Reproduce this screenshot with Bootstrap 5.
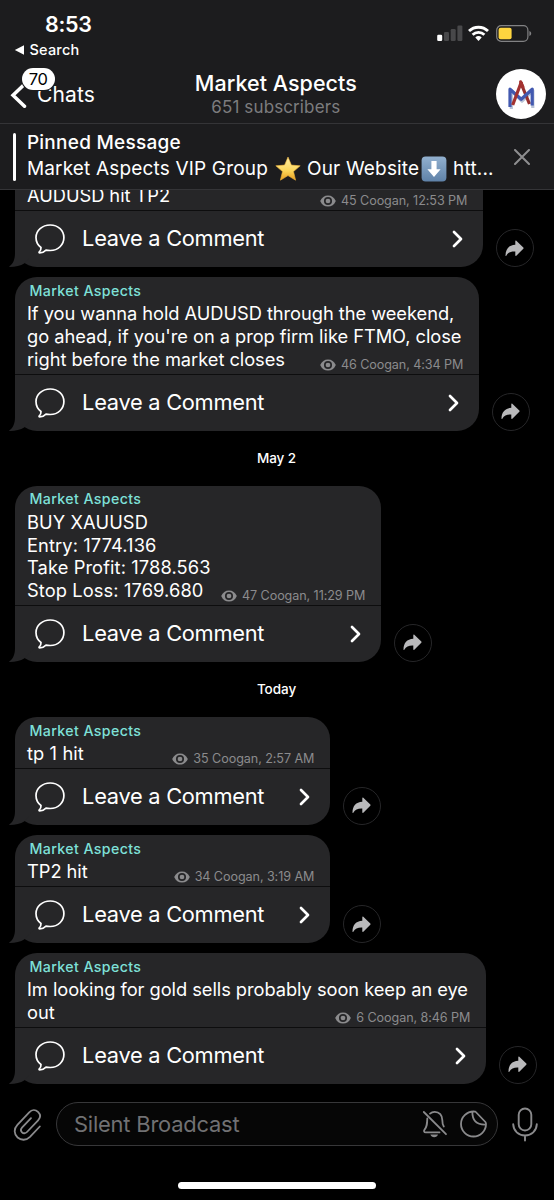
<!DOCTYPE html>
<html lang="en">
<head>
<meta charset="utf-8">
<meta name="viewport" content="width=device-width, initial-scale=1">
<title>Market Aspects</title>
<link href="https://cdn.jsdelivr.net/npm/bootstrap@5.3.0/dist/css/bootstrap.min.css" rel="stylesheet">
<style>
  body { width: 554px; height: 1200px; overflow: hidden; background: #000; color: #fff; font-family: Inter, "Liberation Sans", sans-serif; }
  svg { display: block; flex: none; }
  .top-panel { background: #1c1c1e; flex: none; }
  .status { height: 60px; }
  .status-left { padding-top: 12.2px; }
  .clock { font-size: 21.5px; line-height: 24px; font-weight: 600; letter-spacing: -.3px; padding-left: 45px; }
  .back-app { font-size: 14.5px; line-height: 18px; font-weight: 500; letter-spacing: .2px; padding: 0 0 0 14px; margin-top: 4.5px; gap: 4.5px; }
  .status-right { padding: 25px 22.3px 0 0; gap: 7px; }
  .wifi { margin-left: -2px; }
  .title-row { height: 64px; border-bottom: 1px solid #343437; display: grid; grid-template-columns: 1fr auto 1fr; }
  .back-link { padding: 21.9px 0 0 10px; font-size: 21px; line-height: 26px; letter-spacing: .14px; }
  .back-link .label { margin-left: 10px; }
  .unread { left: 21.5px; top: 8px; width: 33.5px; height: 22px; border-radius: 11px; background: #fff; color: #000; font-size: 16.5px; line-height: 22px; letter-spacing: -.2px; box-shadow: 0 0 0 1px #1c1c1e; }
  .chan { padding: 10.2px 2.4px 0 0; }
  .chan-name { font-size: 21.5px; line-height: 26px; font-weight: 500; letter-spacing: .04px; }
  .chan-subs { font-size: 17px; line-height: 20px; letter-spacing: .12px; color: #7c7c7e; margin-top: .4px; }
  .logo { width: 50px; height: 50px; margin: 9px 8px 0 0; border-radius: 50%; background: #fff; }
  .pinned { height: 66px; border-bottom: 1px solid #343437; padding-left: 13.3px; }
  .pin-bar { width: 2.6px; height: 48px; margin-top: 9px; border-radius: 2px; background: #fff; }
  .pin-text { margin: 6.6px 0 0 11px; }
  .pin-title { font-size: 19px; line-height: 24px; font-weight: 500; letter-spacing: .25px; }
  .pin-line { font-size: 19px; line-height: 26px; letter-spacing: .17px; margin-top: 1.6px; white-space: pre; }
  .star { margin: 0 6px 0 7px; }
  .arrow-box { margin: 0 6.5px 0 1.3px; }
  .close-x { margin: 25px 24px 0 auto; }
  .feed { height: 893.8px; overflow: hidden; flex: none; }
  .post { gap: 12.6px; margin: 0 0 10px 15px; flex: none; }
  .post.last-in-day { margin-bottom: 0; }
  .bubble { background: #262628; border-radius: 22px; position: relative; }
  .tail { position: absolute; left: -6px; bottom: 0; }
  .bubble-text { padding: 5.6px 15.7px 3.3px 12px; border-bottom: 1px solid #0d0d0e; }
  .author { height: 16px; font-size: 14.2px; line-height: 16px; font-weight: 500; letter-spacing: .38px; color: #7ee0d8; padding-left: 2.5px; margin-bottom: 3.6px; }
  .msg { font-size: 18.3px; line-height: 22.75px; letter-spacing: -.05px; white-space: nowrap; }
  .signal .msg > span:first-child, .signal div.msg { letter-spacing: .1px; }
  .msg .views, .signal .msg .views { font-size: 12.6px; line-height: 12px; letter-spacing: -.08px; color: #8b8b8d; gap: 5px; margin-top: 10.75px; height: 12px; }
  .comment { height: 55.8px; padding: 0 20.4px 0 20px; }
  .comment-label { font-size: 21.8px; line-height: 26px; letter-spacing: -.27px; padding: 0 0 2.4px 17.1px; }
  .share { width: 38px; height: 38px; border: 1px solid #262628; border-radius: 50%; flex: none; }
  .day { height: 55px; font-size: 13.5px; font-weight: 500; letter-spacing: -.05px; line-height: 55px; flex: none; padding-right: 1px; }
  .composer { padding: 18.5px 16px 0 13px; }
  .field { width: 441.5px; height: 43.5px; border: 1px solid #373739; border-radius: 22px; background: #060606; margin-left: 14px; padding: 0 9.5px 0 17px; }
  .placeholder-text { font-size: 21.9px; letter-spacing: -.2px; line-height: 26px; color: #717173; padding-bottom: 1px; }
  .home-bar { width: 198px; height: 7.5px; border-radius: 4px; background: #fff; margin: 36.2px auto 0; }
</style>
</head>
<body class="d-flex flex-column">

<svg width="0" height="0" class="position-absolute" aria-hidden="true">
  <symbol id="i-bubble" viewBox="0 0 30 30"><path d="M15.200 1C7.200 1 1 6.500 1 13.500c0 4.300 1.900 7.700 5 10c.1 1.900-.4 3.200-1.700 4.400c-.5.500-.2 1 .4 1c2.400 0 4.500-1 6.300-2.800c1.300.3 2.700.4 4.200.4c8 0 13.700-5.700 13.700-12.900S23.200 1 15.200 1z" fill="none" stroke="#fff" stroke-width="1.700" stroke-linejoin="round"/></symbol>
  <symbol id="i-chev" viewBox="0 0 11 18"><path d="M2 2l7 7L2 16" fill="none" stroke="#fff" stroke-width="2.700" stroke-linecap="round" stroke-linejoin="round"/></symbol>
  <symbol id="i-eye" viewBox="0 0 16 12"><path d="M8 .4C4.500.4 1.700 2.400.2 6c1.500 3.600 4.300 5.600 7.800 5.600S14.300 9.600 15.800 6C14.300 2.400 11.500.4 8 .4z" fill="#8b8b8d"/><circle cx="8" cy="6" r="3.200" fill="none" stroke="#262628" stroke-width="1.700"/></symbol>
  <symbol id="i-share" viewBox="0 0 19 17"><path d="M10.300 1.200c0-.7.5-.9 1-.5l7 6.900c.4.400.4.800 0 1.200l-7 6.900c-.5.400-1 .2-1-.5v-3.600C6.200 11.400 3.100 12.300 1.300 15.700c-.3.500-.8.400-.8-.3C.6 9.300 3.900 5 10.300 4.800z" fill="#b9b9bb"/></symbol>
  <symbol id="i-tail" viewBox="0 0 26 26"><path d="M6 0v12C6 18 4.500 22.500.4 25.300C.1 25.600.3 26 .7 26C6.500 26 11.500 25 15.500 22.300L26 12V0z" fill="#262628"/></symbol>
</svg>

<header class="top-panel">
  <div class="status d-flex justify-content-between">
    <div class="status-left">
      <div class="clock">8:53</div>
      <div class="back-app d-flex align-items-center">
        <svg width="11" height="10" viewBox="0 0 11 10"><path d="M.8 5L10 .3v9.400z" fill="#fff"/></svg><span>Search</span>
      </div>
    </div>
    <div class="status-right d-flex">
      <svg width="26" height="17" viewBox="0 0 26 17"><rect x=".2" y="9.700" width="5" height="6.300" rx="1.200" fill="#fff"/><g fill="#48484a"><rect x="7" y="7" width="5" height="9" rx="1.200"/><rect x="13.700" y="4" width="5" height="12" rx="1.200"/><rect x="20.400" y=".5" width="5" height="15.500" rx="1.200"/></g></svg>
      <svg class="wifi" width="21" height="17" viewBox="0 0 21 17"><g fill="none" stroke="#fff" stroke-width="2.800"><path d="M1 6.100a13.600 13.600 0 0 1 19 0"/><path d="M4.600 9.700a8.500 8.500 0 0 1 11.800 0"/></g><path d="M7.300 12.600a4.700 4.700 0 0 1 6.400 0L10.500 16z" fill="#fff"/></svg>
      <svg width="36" height="17" viewBox="0 0 36 17"><rect x=".7" y=".7" width="31.200" height="15.600" rx="4.500" fill="none" stroke="#828284" stroke-width="1.200"/><rect x="2.600" y="2.700" width="13" height="11.600" rx="2" fill="#fed53f"/><path d="M33.400 6v5c1.200-.5 1.800-1.400 1.800-2.500S34.600 6.500 33.400 6z" fill="#828284"/></svg>
    </div>
  </div>
  <div class="title-row">
    <div class="back-link d-flex align-items-start position-relative">
      <svg width="17" height="27" viewBox="0 0 17 27"><path d="M14.500 2.200L3 13.200l11.500 11" fill="none" stroke="#fff" stroke-width="3.500" stroke-linecap="round" stroke-linejoin="miter"/></svg>
      <span class="label">Chats</span>
      <span class="unread position-absolute text-center">70</span>
    </div>
    <div class="chan text-center">
      <div class="chan-name">Market Aspects</div>
      <div class="chan-subs">651 subscribers</div>
    </div>
    <div class="logo ms-auto">
      <svg width="50" height="50" viewBox="0 0 50 50"><g fill="none" stroke-width="3.200" stroke-linejoin="round" stroke-linecap="butt"><path d="M14.300 39V20.500L25 31l10.800-10.500V38" stroke="#b9c3d6" transform="translate(1 1)"/><path d="M24.700 13.500L33.500 35" stroke="#96302f"/><path d="M14 38V20.200L25.200 30.300 36.200 20.200V36.500" stroke="#4259b0"/><path d="M16.700 36L25.400 12.800" stroke="#a33230"/><path d="M24.700 12.800l2.200 5" stroke="#a33230" stroke-linecap="round"/></g></svg>
    </div>
  </div>
  <div class="pinned d-flex align-items-start">
    <div class="pin-bar"></div>
    <div class="pin-text">
      <div class="pin-title">Pinned Message</div>
      <div class="pin-line d-flex align-items-center"><span>Market Aspects VIP Group</span><svg class="star" width="26" height="26" viewBox="0 0 26 26"><defs><linearGradient id="gold" x1="0" y1="0" x2="0" y2="1"><stop offset="0" stop-color="#fff0a8"/><stop offset=".6" stop-color="#fbd558"/><stop offset="1" stop-color="#e79d1f"/></linearGradient></defs><path d="M13 1l3.400 8.100 8.800.7-6.700 5.800 2.100 8.600-7.600-4.600-7.600 4.600 2.100-8.600L.8 9.800l8.800-.7z" fill="url(#gold)" stroke="#edb23a" stroke-width=".6" stroke-linejoin="round"/></svg><span>Our Website</span><svg class="arrow-box" width="26" height="26" viewBox="0 0 26 26"><defs><linearGradient id="steel" x1="0" y1="0" x2="0" y2="1"><stop offset="0" stop-color="#92b0cf"/><stop offset="1" stop-color="#5f82a8"/></linearGradient></defs><rect x=".6" y=".6" width="24.800" height="24.800" rx="4" fill="url(#steel)"/><path d="M10.400 5h5.200v8.300h4L13 21 6.400 13.300h4z" fill="#fff"/></svg><span>htt...</span></div>
    </div>
    <svg class="close-x" width="16" height="16" viewBox="0 0 16 16"><path d="M1 1l14 14M15 1L1 15" stroke="#8e8e90" stroke-width="2" stroke-linecap="round"/></svg>
  </div>
</header>

<main class="feed d-flex flex-column justify-content-end">
  <article class="post d-flex align-items-end">
    <div class="bubble" style="width:468px">
      <svg class="tail" width="26" height="26"><use href="#i-tail"/></svg>
      <div class="bubble-text">
        <div class="author"></div>
        <div class="msg d-flex justify-content-between"><span>AUDUSD hit TP2</span><span class="views d-flex align-items-center"><svg width="16" height="12"><use href="#i-eye"/></svg>45 Coogan, 12:53 PM</span></div>
      </div>
      <div class="comment d-flex align-items-center position-relative"><svg width="30" height="30"><use href="#i-bubble"/></svg><span class="comment-label flex-grow-1">Leave a Comment</span><svg width="11" height="18"><use href="#i-chev"/></svg></div>
    </div>
    <div class="share d-flex align-items-center justify-content-center"><svg width="19" height="17"><use href="#i-share"/></svg></div>
  </article>

  <article class="post last-in-day d-flex align-items-end">
    <div class="bubble" style="width:464px">
      <svg class="tail" width="26" height="26"><use href="#i-tail"/></svg>
      <div class="bubble-text">
        <div class="author">Market Aspects</div>
        <div class="msg">If you wanna hold AUDUSD through the weekend,</div>
        <div class="msg">go ahead, if you're on a prop firm like FTMO, close</div>
        <div class="msg d-flex justify-content-between"><span>right before the market closes</span><span class="views d-flex align-items-center"><svg width="16" height="12"><use href="#i-eye"/></svg>46 Coogan, 4:34 PM</span></div>
      </div>
      <div class="comment d-flex align-items-center position-relative"><svg width="30" height="30"><use href="#i-bubble"/></svg><span class="comment-label flex-grow-1">Leave a Comment</span><svg width="11" height="18"><use href="#i-chev"/></svg></div>
    </div>
    <div class="share d-flex align-items-center justify-content-center"><svg width="19" height="17"><use href="#i-share"/></svg></div>
  </article>

  <div class="day text-center">May 2</div>

  <article class="post signal last-in-day d-flex align-items-end">
    <div class="bubble" style="width:366px">
      <svg class="tail" width="26" height="26"><use href="#i-tail"/></svg>
      <div class="bubble-text">
        <div class="author">Market Aspects</div>
        <div class="msg">BUY XAUUSD</div>
        <div class="msg">Entry: 1774.136</div>
        <div class="msg">Take Profit: 1788.563</div>
        <div class="msg d-flex justify-content-between"><span>Stop Loss: 1769.680</span><span class="views d-flex align-items-center"><svg width="16" height="12"><use href="#i-eye"/></svg>47 Coogan, 11:29 PM</span></div>
      </div>
      <div class="comment d-flex align-items-center position-relative"><svg width="30" height="30"><use href="#i-bubble"/></svg><span class="comment-label flex-grow-1">Leave a Comment</span><svg width="11" height="18"><use href="#i-chev"/></svg></div>
    </div>
    <div class="share d-flex align-items-center justify-content-center"><svg width="19" height="17"><use href="#i-share"/></svg></div>
  </article>

  <div class="day text-center">Today</div>

  <article class="post signal d-flex align-items-end">
    <div class="bubble" style="width:315px">
      <svg class="tail" width="26" height="26"><use href="#i-tail"/></svg>
      <div class="bubble-text">
        <div class="author">Market Aspects</div>
        <div class="msg d-flex justify-content-between"><span>tp 1 hit</span><span class="views d-flex align-items-center"><svg width="16" height="12"><use href="#i-eye"/></svg>35 Coogan, 2:57 AM</span></div>
      </div>
      <div class="comment d-flex align-items-center position-relative"><svg width="30" height="30"><use href="#i-bubble"/></svg><span class="comment-label flex-grow-1">Leave a Comment</span><svg width="11" height="18"><use href="#i-chev"/></svg></div>
    </div>
    <div class="share d-flex align-items-center justify-content-center"><svg width="19" height="17"><use href="#i-share"/></svg></div>
  </article>

  <article class="post d-flex align-items-end">
    <div class="bubble" style="width:315px">
      <svg class="tail" width="26" height="26"><use href="#i-tail"/></svg>
      <div class="bubble-text">
        <div class="author">Market Aspects</div>
        <div class="msg d-flex justify-content-between"><span>TP2 hit</span><span class="views d-flex align-items-center"><svg width="16" height="12"><use href="#i-eye"/></svg>34 Coogan, 3:19 AM</span></div>
      </div>
      <div class="comment d-flex align-items-center position-relative"><svg width="30" height="30"><use href="#i-bubble"/></svg><span class="comment-label flex-grow-1">Leave a Comment</span><svg width="11" height="18"><use href="#i-chev"/></svg></div>
    </div>
    <div class="share d-flex align-items-center justify-content-center"><svg width="19" height="17"><use href="#i-share"/></svg></div>
  </article>

  <article class="post last-in-day d-flex align-items-end">
    <div class="bubble" style="width:471px">
      <svg class="tail" width="26" height="26"><use href="#i-tail"/></svg>
      <div class="bubble-text">
        <div class="author">Market Aspects</div>
        <div class="msg">Im looking for gold sells probably soon keep an eye</div>
        <div class="msg d-flex justify-content-between"><span>out</span><span class="views d-flex align-items-center"><svg width="16" height="12"><use href="#i-eye"/></svg>6 Coogan, 8:46 PM</span></div>
      </div>
      <div class="comment d-flex align-items-center position-relative"><svg width="30" height="30"><use href="#i-bubble"/></svg><span class="comment-label flex-grow-1">Leave a Comment</span><svg width="11" height="18"><use href="#i-chev"/></svg></div>
    </div>
    <div class="share d-flex align-items-center justify-content-center"><svg width="19" height="17"><use href="#i-share"/></svg></div>
  </article>
</main>

<footer>
  <div class="composer d-flex align-items-center">
    <svg width="29" height="33" viewBox="0 0 29 33"><path d="M26.800 18.500L17 28.900C13.200 32.700 8 32.500 4.600 29.500C.8 26 .7 20.700 4.400 16.800L16.200 4.300c2.700-2.800 6.400-2.700 8.800-.5c2.600 2.500 2.600 5.900.1 8.600L14 24c-1.500 1.600-3.700 1.600-5 .3c-1.400-1.400-1.300-3.400.2-5L18 10.100" fill="none" stroke="#8a8a8c" stroke-width="1.800" stroke-linecap="round"/></svg>
    <div class="field d-flex align-items-center">
      <span class="placeholder-text flex-grow-1">Silent Broadcast</span>
      <svg class="me-2" width="30" height="28" viewBox="0 0 30 28"><g fill="none" stroke="#8a8a8c" stroke-width="1.800" stroke-linecap="round" stroke-linejoin="round"><path d="M1.800 2L24 24.200"/><path d="M8 3.600C9.300 2.400 11 1.800 12.700 1.800c4.700 0 7.600 3.600 7.600 8.200c0 3.300.5 5 1.500 6.600"/><path d="M5.300 8.500C5.100 14.500 5 16.700 2.700 19.400c-1.200 1.400-.7 3 1 3H17.500"/></g><path d="M8.400 24.600h7.600c-.6 1.700-2 2.700-3.800 2.700s-3.200-1-3.800-2.700z" fill="#8a8a8c"/></svg>
      <svg width="27" height="28" viewBox="0 0 27 28"><g fill="none" stroke="#8a8a8c" stroke-width="1.800" stroke-linejoin="round"><path d="M14.300 1.500C6.500 1.200 1 7.200 1 14c0 7 5.600 12.500 12.500 12.500S26 21 26 14c0-.8-.1-1.400-.6-2L15.800 2c-.4-.4-.8-.5-1.500-.5z"/><path d="M12.300 1.600c0 8.600 3.500 13.400 13.600 13"/></g></svg>
    </div>
    <svg class="ms-auto" width="26" height="35" viewBox="0 0 26 35"><g fill="none" stroke="#8a8a8c" stroke-width="1.900" stroke-linecap="round"><rect x="6.700" y="1.500" width="12.600" height="22" rx="6.300"/><path d="M1.200 17.300C1.500 24 6.500 28.500 13 28.500S24.500 24 24.800 17.300M13 28.500v5"/></g></svg>
  </div>
  <div class="home-bar"></div>
</footer>

<script src="https://cdn.jsdelivr.net/npm/bootstrap@5.3.0/dist/js/bootstrap.bundle.min.js"></script>
</body>
</html>
